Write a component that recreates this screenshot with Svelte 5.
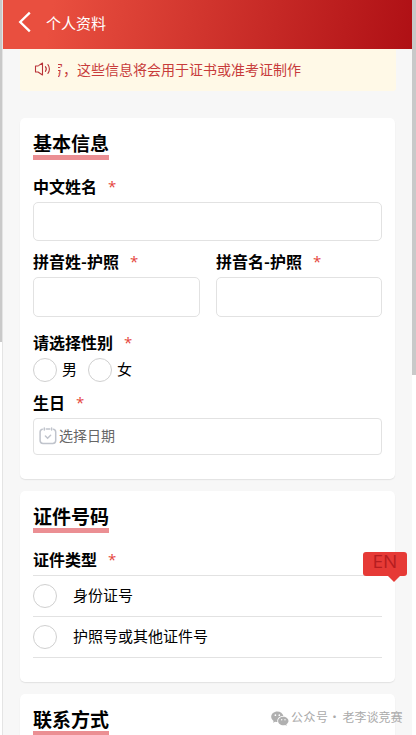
<script>
  const genders = ['男', '女'];
  const idTypes = ['身份证号', '护照号或其他证件号'];
</script>

{#snippet label(text)}
  <div class="label"><span>{text}</span><span class="star">*</span></div>
{/snippet}

<div class="frame">
  <div class="track left"><div class="thumb"></div></div>
  <main class="page">
    <header>
      <svg class="back" width="14" height="22" viewBox="0 0 14 22"><path d="M11.800 1.600 2.200 11l9.600 9.400" fill="none" stroke="#fff" stroke-width="2.300" /></svg>
      <span>个人资料</span>
    </header>

    <div class="notice">
      <svg width="18" height="16" viewBox="0 0 18 16" fill="none" stroke="#b93338" stroke-width="1.1" stroke-linejoin="round" stroke-linecap="round">
        <path d="M4 5H1.5v6H4l4.5 3V2L4.9 4.4" />
        <path d="M11.4 5.6c1 1.3 1 3.5 0 4.8" />
        <path d="M13.9 3.6c2 2.4 2 6.4 0 8.8" />
      </svg>
      <div class="marquee"><span>写，这些信息将会用于证书或准考证制作</span></div>
    </div>

    <section class="card basic">
      <h2>基本信息</h2>
      {@render label('中文姓名')}
      <input class="name" aria-label="中文姓名" />
      <div class="pair">
        <div>{@render label('拼音姓-护照')}<input aria-label="拼音姓" /></div>
        <div>{@render label('拼音名-护照')}<input aria-label="拼音名" /></div>
      </div>
      <div class="gender-label">{@render label('请选择性别')}</div>
      <div class="genders">
        {#each genders as g}
          <div class="option"><i class="radio"></i><span>{g}</span></div>
        {/each}
      </div>
      <div class="birth-label">{@render label('生日')}</div>
      <div class="date">
        <svg width="18" height="18" viewBox="0 0 18 18" fill="none" stroke="#c0c4cc" stroke-width="1.5" stroke-linecap="round">
          <path d="M3.3 2.2C1.8 2.5 1.1 3.4 1.1 5v8.5c0 2 .9 2.9 2.900 2.900h9.800c2 0 2.900-.9 2.900-2.900V5c0-1.600-.7-2.500-2.200-2.800M7.300 2h3.400" />
          <path d="M5.300 1v2M12.600 1v2M6.400 9l2.200 2.200 3-3" />
        </svg>
        <span>选择日期</span>
      </div>
    </section>

    <section class="card ids">
      <h2>证件号码</h2>
      {@render label('证件类型')}
      <div class="list">
        {#each idTypes as t}
          <div class="row"><i class="radio"></i><span>{t}</span></div>
        {/each}
      </div>
    </section>

    <section class="card contact"><h2>联系方式</h2></section>
  </main>
  <div class="track right"><div class="thumb"></div></div>

  <div class="lang">EN</div>
  <div class="watermark">
    <svg width="18" height="15" viewBox="0 0 18 15">
      <path fill="#b0b0b0" d="M6.4.5C2.9.5.2 2.8.2 5.8c0 1.7.9 3.1 2.4 4.1L2 11.8l2.2-1.1c.7.2 1.4.3 2.2.3-.8-3.4 2-6.1 6-6C11.8 2.3 9.4.5 6.4.5Z" />
      <path fill="#b0b0b0" d="M12.300 5.700c-3 0-5.200 1.900-5.200 4.300s2.300 4.300 5.200 4.300c.6 0 1.200-.1 1.800-.3l1.700.8-.5-1.500c1.200-.8 2.200-1.900 2.200-3.300 0-2.400-2.400-4.300-5.200-4.300Z" />
      <g fill="#fff"><circle cx="4.400" cy="4.200" r=".85" /><circle cx="8.300" cy="4.200" r=".85" /><circle cx="10.700" cy="8.700" r=".7" /><circle cx="14" cy="8.700" r=".7" /></g>
    </svg>
    <span class="kind">公众号</span><span class="dot">·</span><span>老李谈竞赛</span>
  </div>
</div>

<style>
  :global(body) { overflow: hidden; }
  .frame, .frame * { box-sizing: border-box; }
  .frame {
    position: relative;
    display: flex;
    width: 416px;
    height: 735px;
    overflow: hidden;
    background: #fff;
    color: #000;
    font-family: "Noto Sans CJK SC", "Noto Sans", sans-serif;
  }
  .track { height: 735px; flex: none; }
  .left { width: 3px; border-right: 1px solid #e4e4e4; }
  .right { width: 4px; }
  .thumb { background: #c9c9c9; }
  .left .thumb { height: 342px; }
  .right .thumb { height: 375px; }
  .page { width: 409px; flex: none; height: 735px; background: #f7f7f7; overflow: hidden; }
  header {
    display: flex;
    align-items: center;
    height: 49px;
    padding: 0 0 5px 15px;
    color: #fff;
    font-size: 15px;
    line-height: 22px;
    background: linear-gradient(100deg, #e94f3f 12%, #af1015 100%);
  }
  .back { margin-right: 14px; flex: none; }
  header span { margin-top: 1px; }
  .notice {
    display: flex;
    align-items: center;
    width: 376px;
    height: 42px;
    margin-left: 17px;
    padding: 0 0 2px 14px;
    background: #fff9e7;
    border-radius: 0 0 3px 3px;
    color: #c83c3b;
    font-size: 14px;
    line-height: 20px;
  }
  .notice svg { flex: none; }
  .marquee { display: flex; width: 290px; margin-left: 6px; overflow: hidden; white-space: nowrap; }
  .marquee span { margin-left: -9px; }
  .card {
    width: 375px;
    margin-left: 17px;
    padding: 12px 13px 0;
    background: #fff;
    border-radius: 5px;
    box-shadow: 0 1px 1px #e2e2e2;
  }
  .basic { height: 361px; margin-top: 27px; }
  .ids { height: 191px; margin-top: 12px; }
  .contact { height: 80px; margin-top: 12px; }
  h2 {
    width: 76px;
    height: 30px;
    margin: 0 0 14px;
    border-bottom: 5px solid #eb8f93;
    font-size: 19px;
    line-height: 25px;
    font-weight: 700;
    white-space: nowrap;
  }
  .label { display: flex; height: 24px; font-size: 16px; line-height: 24px; font-weight: 600; white-space: nowrap; }
  .star { margin-left: 11px; color: #e5453c; font-family: "Open Sans", sans-serif; font-size: 15px; font-weight: 400; }
  input {
    display: block;
    width: 100%;
    height: 40px;
    margin: 4px 0 0;
    padding: 0 10px;
    border: 1px solid #e2e2e2;
    border-radius: 5px;
    background: #fff;
    outline: none;
  }
  input.name { height: 39px; }
  .pair { display: flex; gap: 16px; margin-top: 8px; }
  .pair > div { width: 167px; }
  .pair > div:last-child { width: 166px; }
  .gender-label { margin-top: 13px; }
  .genders { display: flex; gap: 11px; height: 24px; margin-top: 4px; font-size: 15px; line-height: 22px; }
  .option { display: flex; gap: 5px; width: 44px; }
  .radio { display: block; flex: none; width: 24px; height: 24px; border: 1px solid #d0d0d0; border-radius: 50%; }
  .birth-label { margin-top: 8px; }
  .date {
    display: flex;
    align-items: center;
    height: 37px;
    margin-top: 4px;
    padding: 0 0 2px 5px;
    border: 1px solid #e2e2e2;
    border-radius: 4px;
    font-size: 14px;
    line-height: 20px;
    color: #666;
  }
  .date span { margin: -1px 0 0 2px; }
  .list { margin-top: 4px; border-top: 1px solid #e2e2e2; }
  .row { display: flex; align-items: center; gap: 16px; height: 41px; border-bottom: 1px solid #e2e2e2; font-size: 15px; line-height: 22px; }
  .row span { margin-top: -2px; }
  .lang {
    position: absolute;
    left: 363px;
    top: 552px;
    width: 44px;
    height: 24px;
    border-radius: 3px;
    background: #e63a36;
    color: #b51d20;
    font: 19px/18px "Open Sans", sans-serif;
    text-align: center;
  }
  .lang::after {
    content: "";
    position: absolute;
    left: 25px;
    top: 24px;
    border: 6px solid transparent;
    border-top-color: #e63a36;
    border-bottom: 0;
  }
  .watermark {
    position: absolute;
    left: 271px;
    top: 707px;
    display: flex;
    align-items: center;
    height: 20px;
    color: #aaa;
    font-size: 12px;
    line-height: 18px;
    white-space: nowrap;
  }
  .watermark svg { margin: 2px 2px 0 0; }
  .watermark .kind { letter-spacing: 0.5px; }
  .watermark .dot { width: 14px; padding-right: 4px; text-align: center; }
</style>
